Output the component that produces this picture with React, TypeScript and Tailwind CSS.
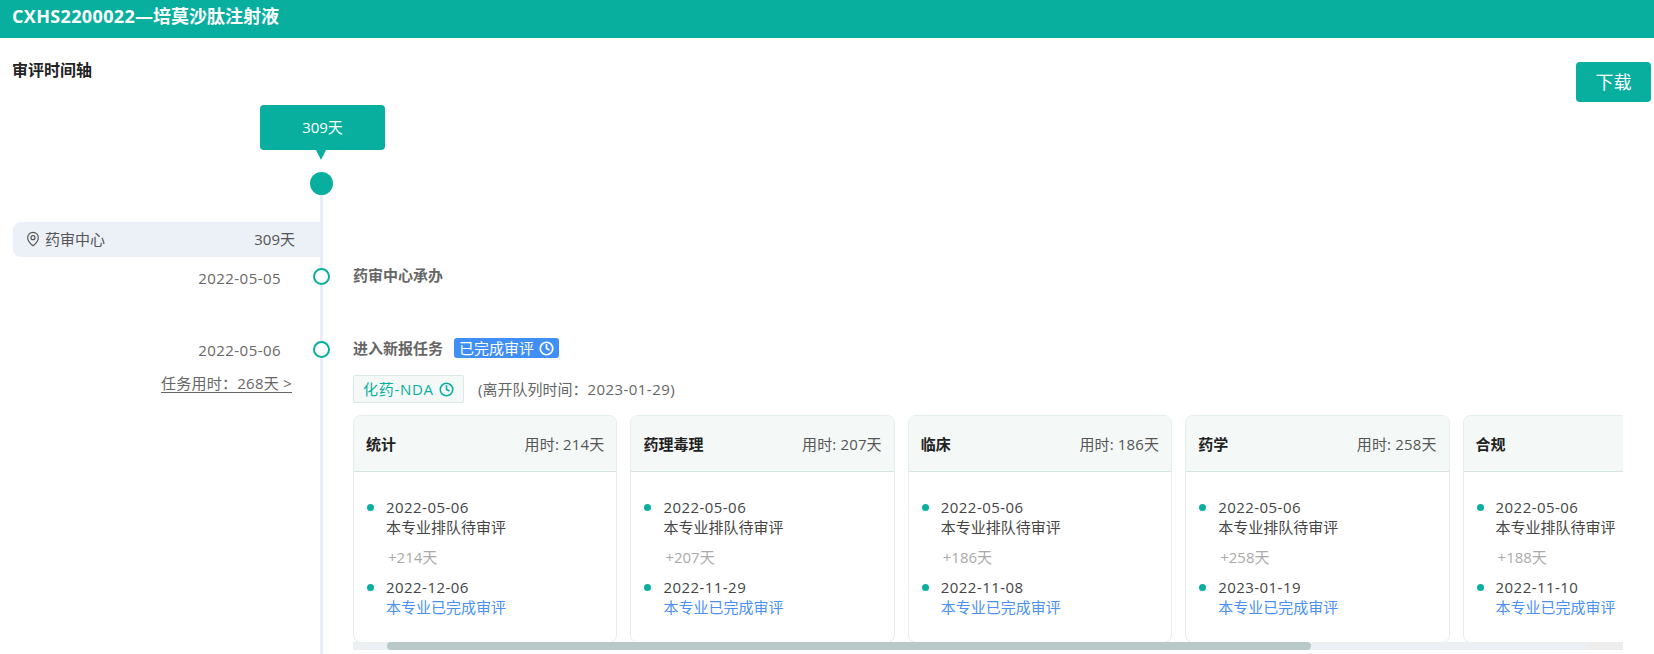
import React from "react";
import { MapPin, Clock } from "lucide-react";

const cards = [
  { name: "统计", used: "用时: 214天", d1: "2022-05-06", plus: "+214天", d2: "2022-12-06" },
  { name: "药理毒理", used: "用时: 207天", d1: "2022-05-06", plus: "+207天", d2: "2022-11-29" },
  { name: "临床", used: "用时: 186天", d1: "2022-05-06", plus: "+186天", d2: "2022-11-08" },
  { name: "药学", used: "用时: 258天", d1: "2022-05-06", plus: "+258天", d2: "2023-01-19" },
  { name: "合规", used: "用时: 188天", d1: "2022-05-06", plus: "+188天", d2: "2022-11-10" },
];

function Card({ c }: { c: (typeof cards)[number] }) {
  return (
    <div className="w-[264.4px] h-[228px] shrink-0 rounded-[8px] border border-[#e4eeec] overflow-hidden bg-white">
      <div className="h-[56px] flex items-center justify-between px-[12px] bg-[#f4f9f8] border-b border-[#d6e5e2]">
        <span className="font-bold text-[#222]">{c.name}</span>
        <span className="text-[#555] tracking-[0.15px]">{c.used}</span>
      </div>
      <div className="pt-[25px] pl-[13px]">
        <div className="flex items-center h-[20px]">
          <span className="w-[7px] h-[7px] rounded-full bg-[#08ae9e]" />
          <span className="ml-[12px] text-[#444] tracking-[0.45px]">{c.d1}</span>
        </div>
        <div className="ml-[19px] h-[20px] leading-[20px] text-[#444]">本专业排队待审评</div>
        <div className="ml-[21px] mt-[10px] h-[20px] leading-[20px] text-[#aaa]">{c.plus}</div>
        <div className="flex items-center h-[20px] mt-[10px]">
          <span className="w-[7px] h-[7px] rounded-full bg-[#08ae9e]" />
          <span className="ml-[12px] text-[#444] tracking-[0.45px]">{c.d2}</span>
        </div>
        <div className="ml-[19px] h-[20px] leading-[20px] text-[#4a90f5]">本专业已完成审评</div>
      </div>
    </div>
  );
}

export default function App() {
  return (
    <div className="h-[654px] overflow-hidden bg-white font-['Open_Sans','Noto_Sans_CJK_SC',sans-serif] text-[15px] leading-[20px]">
      <header className="h-[38px] bg-[#08ae9e] pl-[12px] pb-[7px] flex items-center text-white font-bold text-[18px]">
        <span className="tracking-[0.35px]">CXHS2200022</span>—培莫沙肽注射液
      </header>

      <div className="h-[67px] flex justify-between pl-[12px] pr-[3px]">
        <h2 className="mt-[21px] h-[22px] leading-[22px] text-[16px] font-bold text-[#222]">审评时间轴</h2>
        <button className="mt-[24px] w-[75px] h-[40px] rounded-[4px] bg-[#08ae9e] text-white text-[18px]">下载</button>
      </div>

      <div className="ml-[260px] w-[125px] h-[45px] pb-[2px] rounded-[4px] bg-[#08ae9e] flex items-center justify-center text-white">309天</div>
      <div className="ml-[316px] w-0 h-0 border-x-[5.5px] border-x-transparent border-t-[10px] border-t-[#08ae9e] border-b-0 box-content" />
      <div className="h-[24px]" />

      <div className="flex">
        <div className="w-[320px] shrink-0">
          <div className="mt-[38px] ml-[13px] h-[35px] pb-[2px] rounded-l-[8px] bg-[#ecf0f7] flex items-center justify-between pl-[12px] pr-[25px] text-[#555]">
            <span className="flex items-center gap-[4px]">
              <MapPin size={16} strokeWidth={1.75} className="text-[#555]" />
              药审中心
            </span>
            <span>309天</span>
          </div>
          <div className="mt-[11px] pr-[39px] text-right text-[#666] tracking-[0.45px]">2022-05-05</div>
          <div className="mt-[52px] pr-[39px] text-right text-[#666] tracking-[0.45px]">2022-05-06</div>
          <div className="mt-[13px] pr-[28px] text-right text-[#666]">
            <span className="underline underline-offset-[3px] tracking-[0.25px]">任务用时：268天 &gt;</span>
          </div>
        </div>

        <div className="relative flex-1 min-w-0 border-l-[3px] border-[#e9eef6] pl-[30px] pr-[31px] h-[470px]">
          <span className="absolute left-[-13px] top-[-12px] w-[23px] h-[23px] rounded-full bg-[#08ae9e]" />
          <div className="relative mt-[81px] font-bold text-[#666]">
            <span className="absolute left-[-40px] top-[2.5px] w-[17px] h-[17px] rounded-full border-2 border-[#08ae9e] bg-white" />
            药审中心承办
          </div>
          <div className="relative mt-[53px] flex items-center h-[20px]">
            <span className="absolute left-[-40px] top-[2.5px] w-[17px] h-[17px] rounded-full border-2 border-[#08ae9e] bg-white" />
            <span className="font-bold text-[#666]">进入新报任务</span>
            <span className="ml-[11px] h-[20px] w-[104.5px] rounded-[3px] bg-[#3f8ff7] text-white flex items-center pl-[5px] gap-[5px]">
              已完成审评
              <Clock size={15} strokeWidth={2.75} />
            </span>
          </div>
          <div className="mt-[17px] flex items-center h-[28px]">
            <span className="h-[28px] w-[111px] rounded-[2px] border border-[#d8ebe8] bg-[#f4f9f8] text-[#08ae9e] flex items-center pl-[9px] gap-[5px]">
              <span className="tracking-[0.7px]">化药-NDA</span>
              <Clock size={15} strokeWidth={2.5} />
            </span>
            <span className="ml-[14px] text-[#666]">
              (离开队列时间：<span className="tracking-[0.45px]">2023-01-29)</span>
            </span>
          </div>
          <div className="mt-[12px] flex gap-[13px] overflow-hidden">
            {cards.map((c) => (
              <Card key={c.name} c={c} />
            ))}
          </div>
          <div className="-mt-[1px] relative h-[8px] bg-[#ecf0f3] flex justify-between">
            <div className="ml-[34px] w-[924px] h-[8px] rounded-[4px] bg-[#b9c8c8]" />
            <div className="w-[34px] h-[8px] bg-[#ededed]" />
          </div>
        </div>
      </div>
    </div>
  );
}
